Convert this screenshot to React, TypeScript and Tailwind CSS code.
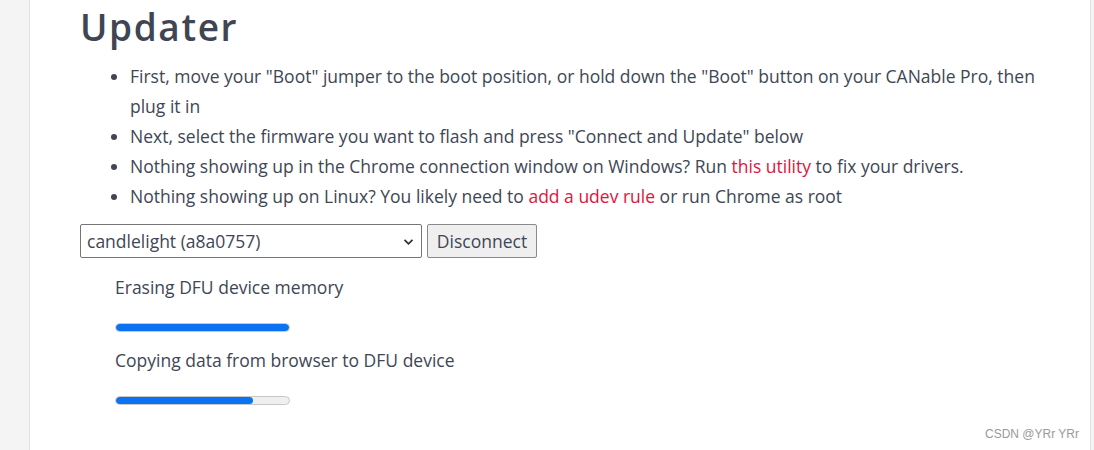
import React from 'react';

const steps = [
  { id: 1, parts: ['First, move your "Boot" jumper to the boot position, or hold down the "Boot" button on your CANable Pro, then plug it in'] },
  { id: 2, parts: ['Next, select the firmware you want to flash and press "Connect and Update" below'] },
  { id: 3, parts: ['Nothing showing up in the Chrome connection window on Windows? Run ', { link: 'this utility' }, ' to fix your drivers.'] },
  { id: 4, parts: ['Nothing showing up on Linux? You likely need to ', { link: 'add a udev rule' }, ' or run Chrome as root'] },
];

const ProgressRow = ({ label, value }: { label: string; value: number }) => (
  <div className="pl-[35px]">
    <p className="leading-[30px] mb-[21px]">{label}</p>
    <div className="w-[175px] h-[9px] rounded-full bg-[#efefef] border border-[#c8c8c8] overflow-hidden mb-[13px]">
      <div className="h-full bg-[#0b73f2] rounded-full" style={{ width: `${value}%` }} />
    </div>
  </div>
);

export default function App() {
  return (
    <div
      className="relative flex w-[1094px] h-[450px] overflow-hidden bg-white text-[#404654] text-[17.5px]"
      style={{ fontFamily: '"Open Sans", sans-serif' }}
    >
      <div className="w-[30px] shrink-0 bg-[#f4f4f4] border-r border-[#e1e1e1]" />

      <main className="flex-1 pl-[50px] pt-[5px]">
        <h1 className="text-[37px] font-semibold tracking-[1.6px] leading-[44px] text-[#3f4552]">Updater</h1>

        <ul className="list-disc pl-[50px] mt-[12px] marker:text-[#404654]">
          {steps.map((s) => (
            <li key={s.id} className="leading-[30px] pr-[40px]">
              {s.parts.map((p, i) =>
                typeof p === 'string' ? (
                  <span key={i}>{p}</span>
                ) : (
                  <a key={i} className="text-[#e0143c]">{p.link}</a>
                )
              )}
            </li>
          ))}
        </ul>

        <div className="flex items-center gap-[5px] mt-[13px]">
          <div className="relative w-[342px] h-[34px] border border-[#767676] rounded-[2px] flex items-center pl-[6px]">
            <span>candlelight (a8a0757)</span>
            <svg className="absolute right-[7px] top-[13px]" width="11" height="8" viewBox="0 0 11 8" fill="none">
              <path d="M1.5 1.8 L5.5 5.8 L9.5 1.8" stroke="#333" strokeWidth="1.8" />
            </svg>
          </div>
          <button className="h-[34px] w-[110px] bg-[#efefef] border border-[#8a8a8a] rounded-[2px] text-[#404654]">
            Disconnect
          </button>
        </div>

        <div className="mt-[14px]">
          <ProgressRow label="Erasing DFU device memory" value={100} />
          <ProgressRow label="Copying data from browser to DFU device" value={79} />
        </div>
      </main>

      <div className="w-[4px] shrink-0 bg-[#f4f4f4] border-l border-[#e1e1e1]" />

      <span
        className="absolute right-[15px] bottom-[7px] text-[12px] text-[#9a9a9a]"
        style={{ fontFamily: '"Liberation Sans", sans-serif' }}
      >
        CSDN @YRr YRr
      </span>
    </div>
  );
}
